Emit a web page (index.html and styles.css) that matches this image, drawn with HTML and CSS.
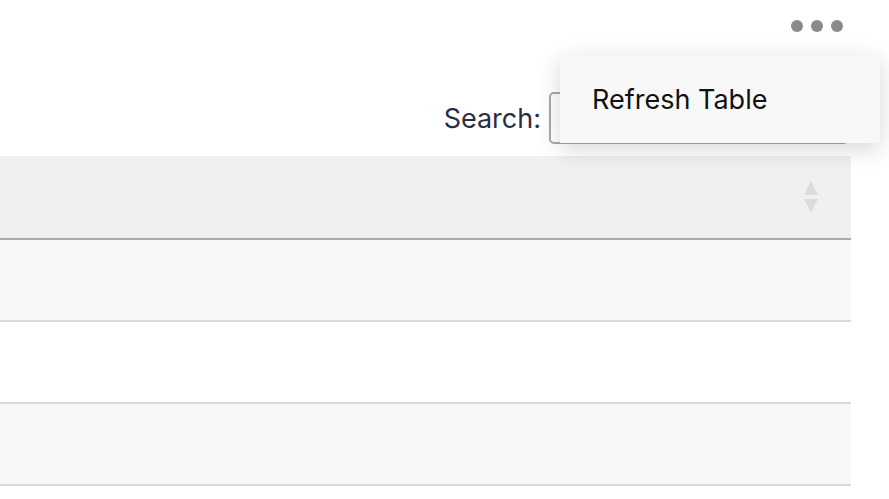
FILE: index.html
```html
<!DOCTYPE html>
<html>
<head>
<meta charset="utf-8">
<link rel="stylesheet" href="styles.css">
</head>
<body>
<div class="page">
  <div class="topbar">
    <button class="more" aria-label="More">
      <span class="dot"></span><span class="dot"></span><span class="dot"></span>
    </button>
  </div>
  <div class="menu">
    <div class="menu-item">Refresh Table</div>
  </div>
  <div class="search-row">
    <label class="search-label">Search:</label>
    <input class="search-input" type="text">
  </div>
  <div class="table">
    <div class="thead">
      <div class="th">
        <svg class="sort" width="14" height="32" viewBox="0 0 14 32">
          <path d="M7 0 L14 14 L0 14 Z" fill="#dcdcdc"/>
          <path d="M0 18 L14 18 L7 32 Z" fill="#dcdcdc"/>
        </svg>
      </div>
    </div>
    <div class="row odd"></div>
    <div class="row even"></div>
    <div class="row odd"></div>
  </div>
</div>
</body>
</html>
```
FILE: styles.css
```css
html, body {
  margin: 0;
  padding: 0;
  background: #ffffff;
  font-family: Inter, "Noto Sans", sans-serif;
}
.page {
  position: relative;
  width: 889px;
}
.topbar {
  height: 52px;
  display: flex;
  justify-content: flex-end;
  align-items: center;
  padding-right: 46px;
}
.more {
  display: flex;
  gap: 8px;
  border: 0;
  background: transparent;
  padding: 0;
}
.dot {
  width: 12px;
  height: 12px;
  border-radius: 50%;
  background: #8a8a8a;
}
.menu {
  position: absolute;
  left: 560px;
  top: 55px;
  width: 320px;
  height: 88px;
  background: #f8f8f8;
  box-shadow: 0 6px 22px rgba(0, 0, 0, 0.16);
  z-index: 2;
}
.menu-item {
  padding: 29px 0 0 32px;
  font-size: 27px;
  color: #111111;
  line-height: 32px;
}
.search-row {
  margin-top: 40px;
  width: 849px;
  display: flex;
  justify-content: flex-end;
  align-items: center;
  gap: 8px;
}
.search-label {
  font-size: 27px;
  color: #2b2d45;
}
.search-input {
  width: 300px;
  height: 52px;
  box-sizing: border-box;
  border: 2px solid #a8a8a8;
  border-radius: 5px;
  background: #fff;
  margin: 0;
}
.table {
  margin-top: 12px;
  width: 851px;
}
.thead {
  height: 82px;
  background: #f0f0f0;
  border-bottom: 2px solid #ababab;
}
.th {
  height: 100%;
  display: flex;
  justify-content: flex-end;
  align-items: center;
  padding-right: 33px;
}
.row {
  height: 80px;
  border-bottom: 2px solid #d9d9d9;
}
.odd { background: #f8f8f8; }
.even { background: #ffffff; }
```
